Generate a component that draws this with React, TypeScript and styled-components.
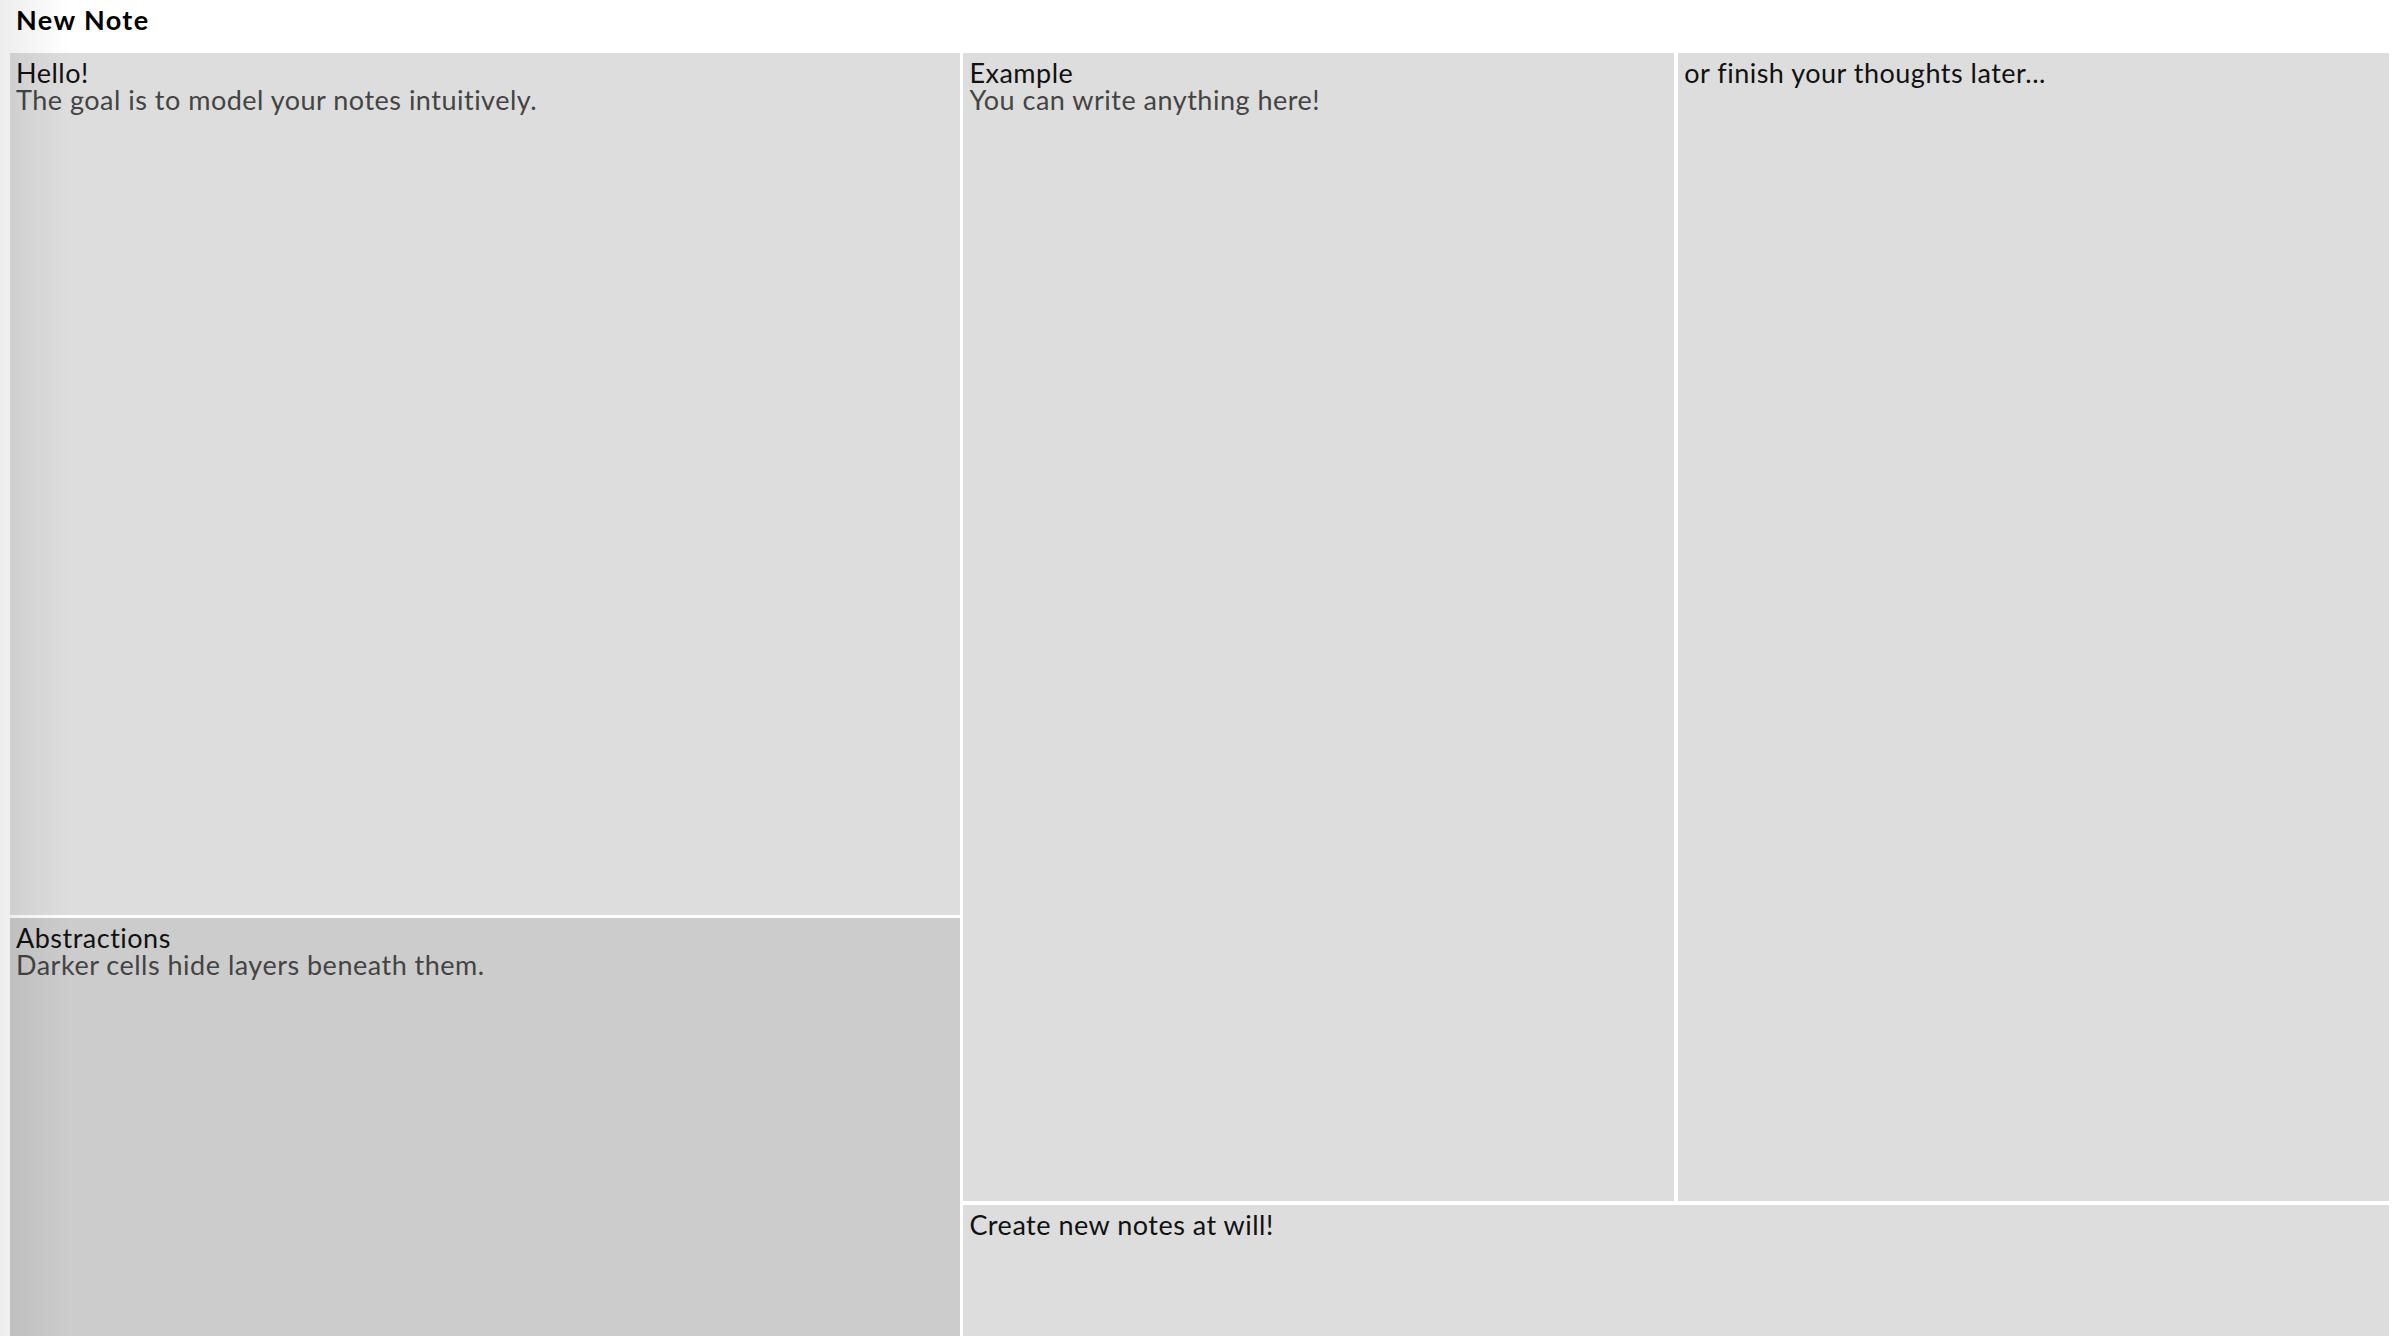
import styled, { createGlobalStyle } from "styled-components";

const GlobalStyle = createGlobalStyle`
  html, body {
    margin: 0;
    padding: 0;
    background: #ffffff;
    overflow: hidden;
  }
  body {
    font-family: Lato, "Liberation Sans", sans-serif;
    color: #000;
  }
`;

type Note = {
    title: string;
    body?: string;
    dark?: boolean;
};

export default function App() {
    return (
        <>
            <GlobalStyle />
            <Page>
                <Header>New Note</Header>
                <Board>
                    <LeftColumn>
                        <NoteCell note={{ title: "Hello!", body: "The goal is to model your notes intuitively." }} grow={3} />
                        <NoteCell note={{ title: "Abstractions", body: "Darker cells hide layers beneath them.", dark: true }} grow={2} />
                    </LeftColumn>
                    <RightColumn>
                        <TopRow>
                            <NoteCell note={{ title: "Example", body: "You can write anything here!" }} grow={1} />
                            <NoteCell note={{ title: "or finish your thoughts later..." }} grow={1} />
                        </TopRow>
                        <NoteCell note={{ title: "Create new notes at will!" }} grow={0.99} />
                    </RightColumn>
                </Board>
                <EdgeShade />
            </Page>
        </>
    );
}

const NoteCell = ({ note, grow }: { note: Note; grow: number }) => (
    <Cell $dark={note.dark} $grow={grow}>
        <Title>{note.title}</Title>
        {note.body && <Body>{note.body}</Body>}
    </Cell>
);

const Page = styled.div`
  position: relative;
  height: 1336px;
  overflow: hidden;
`;

const Header = styled.div`
  height: 53px;
  box-sizing: border-box;
  padding: 4px 0 0 16px;
  font-size: 27px;
  line-height: 1.2;
  letter-spacing: 1.4px;
  font-weight: 700;
  color: #000;
`;

const Board = styled.div`
  display: flex;
  gap: 3px;
  height: 1442px;
  margin: 0 11px 0 10px;
`;

const LeftColumn = styled.div`
  flex: 0 0 calc((100% - 3px) * 0.4);
  display: flex;
  flex-direction: column;
  gap: 3px;
`;

const RightColumn = styled.div`
  flex: 1;
  display: flex;
  flex-direction: column;
  gap: 4px;
`;

const TopRow = styled.div`
  flex: 4.01 1 0;
  display: flex;
  gap: 4px;
`;

const Cell = styled.div<{ $dark?: boolean; $grow: number }>`
  flex: ${(p) => p.$grow} 1 0;
  min-height: 0;
  box-sizing: border-box;
  padding: 6px 6px 0 6px;
  background: ${(p) => (p.$dark ? "#cccccc" : "#dddddd")};
  font-size: 27px;
  line-height: 27px;
  letter-spacing: 0.5px;
`;

const Title = styled.div`
  color: #111;
`;

const Body = styled.div`
  color: #444;
`;

const EdgeShade = styled.div`
  position: absolute;
  left: 0;
  top: 0;
  bottom: 0;
  width: 70px;
  pointer-events: none;
  background: linear-gradient(
    to right,
    rgba(0, 0, 0, 0.07) 0px,
    rgba(0, 0, 0, 0.06) 12px,
    rgba(0, 0, 0, 0) 70px
  );
`;
